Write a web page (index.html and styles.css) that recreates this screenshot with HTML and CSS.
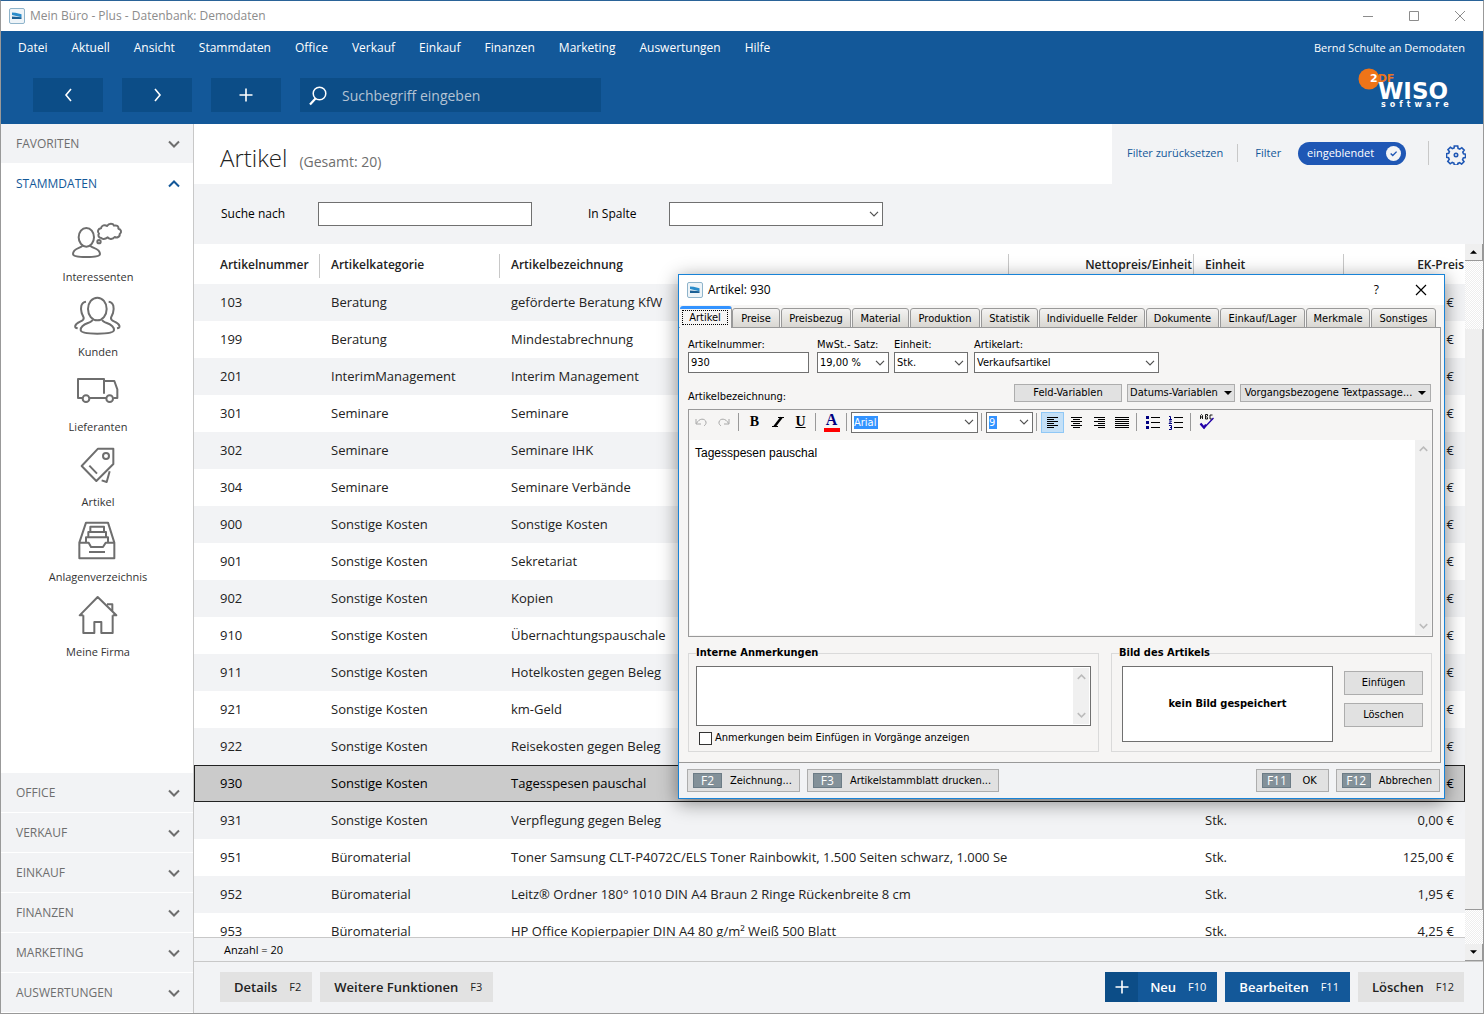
FILE: index.html
```html
<!DOCTYPE html>
<html lang="de">
<head>
<meta charset="utf-8">
<title>Mein Büro - Plus - Datenbank: Demodaten</title>
<link rel="stylesheet" href="styles.css">
</head>
<body>
<svg class="sprite" aria-hidden="true">
  <symbol id="app" viewBox="0 0 16 16"><rect x=".5" y=".5" width="15" height="15" rx="1.5" fill="#eef4f8" stroke="#8fb4cb"/><path d="M3 4.500l3.500.3 6 1.400v3L3 7z" fill="#2a8ccb"/><path d="M3 8.500l9.500.700v1.800H3z" fill="#1b5f94"/></symbol>
  <symbol id="down" viewBox="0 0 12 8"><path d="M1 1.500l5 5 5-5" fill="none" stroke="currentColor" stroke-width="2"/></symbol>
  <symbol id="thin" viewBox="0 0 10 6"><path d="M1 .8l4 4 4-4" fill="none" stroke="#505050" stroke-width="1.200"/></symbol>
  <symbol id="tri" viewBox="0 0 8 4"><path d="M0 0h8L4 4z" fill="currentColor"/></symbol>
  <symbol id="plus" viewBox="0 0 14 14"><path d="M7 .5v13M.5 7h13" stroke="currentColor" stroke-width="1.600"/></symbol>
</svg>

<header class="titlebar">
  <svg class="app-icon"><use href="#app"/></svg>
  <h1>Mein Büro - Plus - Datenbank: Demodaten</h1>
  <div class="window-buttons">
    <button aria-label="Minimieren"><svg viewBox="0 0 12 12"><path d="M1 6.500h10"/></svg></button>
    <button aria-label="Maximieren"><svg viewBox="0 0 12 12"><path d="M1.500 1.500h9v9h-9z"/></svg></button>
    <button aria-label="Schließen"><svg viewBox="0 0 12 12"><path d="M1 1l10 10M11 1L1 11"/></svg></button>
  </div>
</header>

<div class="ribbon">
  <nav class="menu">
    <a href="#">Datei</a><a href="#">Aktuell</a><a href="#">Ansicht</a><a href="#">Stammdaten</a><a href="#">Office</a><a href="#">Verkauf</a><a href="#">Einkauf</a><a href="#">Finanzen</a><a href="#">Marketing</a><a href="#">Auswertungen</a><a href="#">Hilfe</a>
    <span class="user">Bernd Schulte an Demodaten</span>
  </nav>
  <div class="tools">
    <button class="tool" aria-label="Zurück"><svg viewBox="0 0 14 14"><path d="M10 1L5 7l5 6"/></svg></button>
    <button class="tool" aria-label="Vor"><svg viewBox="0 0 14 14"><path d="M5 1l5 6-5 6"/></svg></button>
    <button class="tool" aria-label="Hinzufügen"><svg viewBox="0 0 14 14"><path d="M7 .5v13M.5 7h13"/></svg></button>
    <label class="search">
      <svg viewBox="0 0 18 20"><circle cx="10.500" cy="7.500" r="6.300"/><path d="M6.500 12.500L1 18.500" stroke-width="2.200"/></svg>
      <input type="text" placeholder="Suchbegriff eingeben" aria-label="Suchbegriff eingeben">
    </label>
    <svg class="logo" viewBox="0 0 94 44" role="img" aria-label="ZDF WISO software">
      <circle cx="11" cy="11" r="10.500" fill="#ee7418"/>
      <text class="zdf" x="12" y="14"><tspan fill="#fff">2</tspan><tspan fill="#ee7418">DF</tspan></text>
      <text class="wiso" x="20" y="31">WISO</text>
      <text class="soft" x="23" y="39">software</text>
    </svg>
  </div>
</div>

<div class="body">
  <aside class="sidebar">
    <button class="section">FAVORITEN<svg><use href="#down"/></svg></button>
    <button class="section open">STAMMDATEN<svg><use href="#down"/></svg></button>
    <nav class="shortcuts">
      <a href="#"><svg viewBox="0 0 180 120"><ellipse cx="55" cy="52" rx="23" ry="28"/><path d="M43 76c-1 9-28 7-28 26 0 8 20 9 40 9s41-1 41-9c0-19-28-17-29-26"/><path d="M100 54c-8 0-11-8-7-13-6-6-3-15 6-16 1-9 12-12 18-7 6-9 18-8 21-1 9-3 15 3 13 9 9 2 11 12 4 16 2 9-9 12-15 9-5 7-17 8-21 1-8 6-17 6-19 2z"/><circle cx="93" cy="65" r="5"/></svg>Interessenten</a>
      <a href="#"><svg viewBox="0 0 180 120"><ellipse cx="88" cy="42" rx="28" ry="34"/><path d="M73 74c0 12-35 8-35 31 0 9 25 11 50 11s50-2 50-11c0-23-35-19-35-31"/><path d="M54 20c-16 2-17 20-13 34l6 14c3 13-21 10-25 24-2 5 1 7 7 8M122 20c16 2 17 20 13 34l-6 14c-3 13 21 10 25 24 2 5-1 7-7 8"/></svg>Kunden</a>
      <a href="#"><svg viewBox="0 0 180 120"><path d="M44 84H30V27h78v44M108 33h31l9 25v26h-12M114 84H66"/><circle cx="54" cy="86" r="10"/><circle cx="125" cy="86" r="10"/></svg>Lieferanten</a>
      <a href="#"><svg viewBox="0 0 180 120"><path d="M90 11h46v46l-51 51-44-45zM64 62l23 24M125 79l-9 32-15-5"/><circle cx="114" cy="33" r="9"/></svg>Artikel</a>
      <a href="#"><svg viewBox="0 0 180 120"><path d="M54 8h66l19 60v47H34V68zM34 68h28l7 13h36l8-13h26M54 65V52h66v13M61 51V36h53v15M67 35V20h41v15M63 96h48"/></svg>Anlagenverzeichnis</a>
      <a href="#"><svg viewBox="0 0 180 120"><path d="M46 61H35L89 6l56 55h-11M46 61v53h33V81h21v33h34V61M117 28h16v21"/></svg>Meine Firma</a>
    </nav>
    <div class="sections">
      <button class="section">OFFICE<svg><use href="#down"/></svg></button>
      <button class="section">VERKAUF<svg><use href="#down"/></svg></button>
      <button class="section">EINKAUF<svg><use href="#down"/></svg></button>
      <button class="section">FINANZEN<svg><use href="#down"/></svg></button>
      <button class="section">MARKETING<svg><use href="#down"/></svg></button>
      <button class="section">AUSWERTUNGEN<svg><use href="#down"/></svg></button>
    </div>
  </aside>

  <main class="main">
    <div class="head">
      <div class="heading"><h2>Artikel</h2><span>(Gesamt: 20)</span></div>
      <div class="filters">
        <a class="reset" href="#">Filter zurücksetzen</a>
        <span class="filter-label">Filter</span>
        <button class="pill">eingeblendet<svg viewBox="0 0 16 16"><circle cx="8" cy="8" r="8" fill="#f3f4f6"/><path d="M5 8l2.200 2.200L11.300 6" fill="none" stroke="#1f57b5" stroke-width="1.500"/></svg></button>
        <button class="gear" aria-label="Einstellungen"><svg viewBox="0 0 20 20"><path d="M8.300 1h3.400l.4 2.400 1.700.7 2-1.400 2.400 2.400-1.400 2 .7 1.700 2 .4v3.400l-2.200.4-.7 1.700 1.400 2-2.400 2.400-2-1.400-1.700.7-.2 1.600H8.300l-.4-1.900-1.700-.7-2 1.400-2.400-2.400 1.400-2-.7-1.700-2-.4V8.800l2.200-.4.700-1.700-1.400-2 2.400-2.400 2 1.400 1.700-.7z"/><circle cx="10" cy="10" r="1.700"/></svg></button>
      </div>
    </div>
    <div class="finder">
      <label for="q">Suche nach</label><input id="q" type="text">
      <label for="col">In Spalte</label>
      <span class="combo"><select id="col"><option></option></select><svg><use href="#thin"/></svg></span>
    </div>
    <div class="grid">
      <div class="grid-data">
        <div class="rows">
        <table>
          <colgroup><col class="c1"><col class="c2"><col><col class="c4"><col class="c5"><col class="c6"></colgroup>
          <thead><tr><th><span>Artikelnummer</span></th><th><span>Artikelkategorie</span></th><th><span>Artikelbezeichnung</span></th><th class="num"><span>Nettopreis/Einheit</span></th><th><span>Einheit</span></th><th class="num"><span>EK-Preis</span></th></tr></thead>
          <tbody>
            <tr><td>103</td><td>Beratung</td><td>geförderte Beratung KfW</td><td></td><td></td><td>€</td></tr>
            <tr><td>199</td><td>Beratung</td><td>Mindestabrechnung</td><td></td><td></td><td>€</td></tr>
            <tr><td>201</td><td>InterimManagement</td><td>Interim Management</td><td></td><td></td><td>€</td></tr>
            <tr><td>301</td><td>Seminare</td><td>Seminare</td><td></td><td></td><td>€</td></tr>
            <tr><td>302</td><td>Seminare</td><td>Seminare IHK</td><td></td><td></td><td>€</td></tr>
            <tr><td>304</td><td>Seminare</td><td>Seminare Verbände</td><td></td><td></td><td>€</td></tr>
            <tr><td>900</td><td>Sonstige Kosten</td><td>Sonstige Kosten</td><td></td><td></td><td>€</td></tr>
            <tr><td>901</td><td>Sonstige Kosten</td><td>Sekretariat</td><td></td><td></td><td>€</td></tr>
            <tr><td>902</td><td>Sonstige Kosten</td><td>Kopien</td><td></td><td></td><td>€</td></tr>
            <tr><td>910</td><td>Sonstige Kosten</td><td>Übernachtungspauschale</td><td></td><td></td><td>€</td></tr>
            <tr><td>911</td><td>Sonstige Kosten</td><td>Hotelkosten gegen Beleg</td><td></td><td></td><td>€</td></tr>
            <tr><td>921</td><td>Sonstige Kosten</td><td>km-Geld</td><td></td><td></td><td>€</td></tr>
            <tr><td>922</td><td>Sonstige Kosten</td><td>Reisekosten gegen Beleg</td><td></td><td></td><td>€</td></tr>
            <tr class="selected"><td>930</td><td>Sonstige Kosten</td><td>Tagesspesen pauschal</td><td></td><td></td><td>€</td></tr>
            <tr><td>931</td><td>Sonstige Kosten</td><td>Verpflegung gegen Beleg</td><td></td><td>Stk.</td><td>0,00 €</td></tr>
            <tr><td>951</td><td>Büromaterial</td><td>Toner Samsung CLT-P4072C/ELS Toner Rainbowkit, 1.500 Seiten schwarz, 1.000 Se</td><td></td><td>Stk.</td><td>125,00 €</td></tr>
            <tr><td>952</td><td>Büromaterial</td><td>Leitz® Ordner 180° 1010 DIN A4 Braun 2 Ringe Rückenbreite 8 cm</td><td></td><td>Stk.</td><td>1,95 €</td></tr>
            <tr><td>953</td><td>Büromaterial</td><td>HP Office Kopierpapier DIN A4 80 g/m² Weiß 500 Blatt</td><td></td><td>Stk.</td><td>4,25 €</td></tr>
          </tbody>
        </table>
        </div>
        <div class="count">Anzahl = 20</div>
      </div>
      <div class="scroll">
        <button aria-label="Nach oben"><svg class="up"><use href="#tri"/></svg></button>
        <div class="thumb"></div>
        <button aria-label="Nach unten"><svg><use href="#tri"/></svg></button>
      </div>
    </div>
    <footer class="actions">
      <button>Details<kbd>F2</kbd></button>
      <button>Weitere Funktionen<kbd>F3</kbd></button>
      <button class="primary new"><span class="plus"><svg><use href="#plus"/></svg></span>Neu<kbd>F10</kbd></button>
      <button class="primary">Bearbeiten<kbd>F11</kbd></button>
      <button>Löschen<kbd>F12</kbd></button>
    </footer>
  </main>
</div>

<section class="dialog" role="dialog" aria-labelledby="dlg-title">
  <header class="dlg-title">
    <svg class="app-icon"><use href="#app"/></svg>
    <h2 id="dlg-title">Artikel: 930</h2>
    <button aria-label="Hilfe">?</button>
    <button aria-label="Schließen"><svg viewBox="0 0 12 12"><path d="M1 1l10 10M11 1L1 11"/></svg></button>
  </header>
  <div class="tabs" role="tablist">
    <button role="tab" aria-selected="true"><span>Artikel</span></button><button role="tab">Preise</button><button role="tab">Preisbezug</button><button role="tab">Material</button><button role="tab">Produktion</button><button role="tab">Statistik</button><button role="tab">Individuelle Felder</button><button role="tab">Dokumente</button><button role="tab">Einkauf/Lager</button><button role="tab">Merkmale</button><button role="tab">Sonstiges</button>
  </div>
  <div class="panel">
    <div class="fields">
      <div><label for="nr">Artikelnummer:</label><input id="nr" type="text" value="930"></div>
      <div><label for="mwst">MwSt.- Satz:</label><span class="combo"><select id="mwst"><option>19,00 %</option></select><svg><use href="#thin"/></svg></span></div>
      <div><label for="unit">Einheit:</label><span class="combo"><select id="unit"><option>Stk.</option></select><svg><use href="#thin"/></svg></span></div>
      <div><label for="art">Artikelart:</label><span class="combo"><select id="art"><option>Verkaufsartikel</option></select><svg><use href="#thin"/></svg></span></div>
    </div>
    <div class="variables">
      <label for="text">Artikelbezeichnung:</label>
      <button>Feld-Variablen</button>
      <button>Datums-Variablen<svg><use href="#tri"/></svg></button>
      <button>Vorgangsbezogene Textpassage...<svg><use href="#tri"/></svg></button>
    </div>
    <div class="editor">
      <div class="format">
        <button aria-label="Rückgängig" class="off"><svg viewBox="0 0 16 16"><path d="M3 5v5h5M3.500 9.500C6 4 12 4 13 8c.4 2-1 3-2 4"/></svg></button>
        <button aria-label="Wiederholen" class="off"><svg viewBox="0 0 16 16"><path d="M13 5v5H8M12.500 9.500C10 4 4 4 3 8c-.4 2 1 3 2 4"/></svg></button>
        <i class="sep"></i>
        <button class="letter b">B</button>
        <button class="letter" aria-label="Kursiv"><svg viewBox="0 0 16 16"><path d="M8 3.500h6M2 12.500h6" stroke-width="1"/><path d="M11.500 3.500L4.500 12.500" stroke-width="2.400"/></svg></button>
        <button class="letter u">U</button>
        <i class="sep"></i>
        <button class="letter color">A</button>
        <i class="sep"></i>
        <span class="combo font"><input type="text" value="Arial" aria-label="Schriftart"><svg><use href="#thin"/></svg></span>
        <i class="sep"></i>
        <span class="combo size"><input type="text" value="9" aria-label="Schriftgröße"><svg><use href="#thin"/></svg></span>
        <i class="sep"></i>
        <button class="on" aria-label="Linksbündig"><svg viewBox="0 0 16 16"><path d="M2 3.500h11M2 5.500h7M2 7.500h11M2 9.500h7M2 11.500h11M2 13.500h7"/></svg></button>
        <button aria-label="Zentriert"><svg viewBox="0 0 16 16"><path d="M3 3.500h11M5 5.500h7M3 7.500h11M5 9.500h7M3 11.500h11M5 13.500h7"/></svg></button>
        <button aria-label="Rechtsbündig"><svg viewBox="0 0 16 16"><path d="M3 3.500h11M7 5.500h7M3 7.500h11M7 9.500h7M3 11.500h11M7 13.500h7"/></svg></button>
        <button aria-label="Blocksatz"><svg viewBox="0 0 16 16"><path d="M1 3.500h14M1 5.500h14M1 7.500h14M1 9.500h14M1 11.500h14M1 13.500h14"/></svg></button>
        <i class="sep"></i>
        <button aria-label="Aufzählung"><svg viewBox="0 0 16 16"><path d="M6 3.500h9M6 8.500h9M6 13.500h9"/><path d="M1 3.500h3M1 8.500h3M1 13.500h3" stroke="#000080" stroke-width="3"/></svg></button>
        <button aria-label="Nummerierung"><svg viewBox="0 0 16 16"><path d="M6 3.500h9M6 8.500h9M6 13.500h9"/><path d="M1 2.500h1.500V5M1 5.500h3M1 7h2.500L1 9.500h3M1 11.500h2.500v4H1M2 13.500h2" stroke="#000080"/></svg></button>
        <i class="sep"></i>
        <button aria-label="Rechtschreibung"><svg viewBox="0 0 16 16"><path d="M1.500 5V1.500l1-1 1 1V5M1.500 3h2M6.500 5V.500h2V2l-1 .8 1 .7V5h-2M13.500 1h-2.500v4h2.500" stroke-width=".9"/><path d="M1.500 10l3.500 4L14.500 4" stroke="#2300a8" stroke-width="1.300"/><path d="M1.500 9.500L5 13.500l2-3" stroke="#2300a8" stroke-width="2.200"/></svg></button>
      </div>
      <div class="page">
        <textarea id="text">Tagesspesen pauschal</textarea>
        <div class="mini-scroll"><svg class="up"><use href="#down"/></svg><svg><use href="#down"/></svg></div>
      </div>
    </div>
    <div class="groups">
      <fieldset class="notes">
        <legend>Interne Anmerkungen</legend>
        <div class="note-box"><textarea aria-label="Interne Anmerkungen"></textarea><div class="mini-scroll"><svg class="up"><use href="#down"/></svg><svg><use href="#down"/></svg></div></div>
        <label class="check"><input type="checkbox">Anmerkungen beim Einfügen in Vorgänge anzeigen</label>
      </fieldset>
      <fieldset class="image">
        <legend>Bild des Artikels</legend>
        <div class="image-row">
          <div class="preview">kein Bild gespeichert</div>
          <div class="image-buttons"><button>Einfügen</button><button>Löschen</button></div>
        </div>
      </fieldset>
    </div>
  </div>
  <footer class="dlg-actions">
    <button><kbd>F2</kbd><span>Zeichnung...</span></button>
    <button><kbd>F3</kbd><span>Artikelstammblatt drucken...</span></button>
    <button class="ok"><kbd>F11</kbd><span>OK</span></button>
    <button><kbd>F12</kbd><span>Abbrechen</span></button>
  </footer>
</section>
</body>
</html>
```
FILE: styles.css
```css
:root {
  --blue: #135899;
  --dark: #0c4d87;
  --grey: #f2f3f5;
  --ui: "Open Sans", "Noto Sans", sans-serif;
  --small: "DejaVu Sans Condensed", "DejaVu Sans", sans-serif;
}
* { box-sizing: border-box; }
body {
  margin: 0;
  height: 100vh;
  display: flex;
  flex-direction: column;
  overflow: hidden;
  position: relative;
  font: 12px/18px var(--ui);
  color: #222;
  background: #fff;
  border: 1px solid #999;
  border-top-color: #2a6398;
}
button, input, select, textarea { font: inherit; color: inherit; margin: 0; padding: 0; border: 0; border-radius: 0; background: none; }
h1, h2 { margin: 0; font-weight: 400; }
a { color: inherit; text-decoration: none; }
svg { display: block; flex: none; }
kbd { font: inherit; }
.sprite { position: absolute; width: 0; height: 0; }
.app-icon { width: 16px; height: 16px; }
.up { transform: rotate(180deg); }

.titlebar { display: flex; align-items: center; height: 30px; flex: none; padding: 0 17px 0 8px; gap: 5px; color: #8c8c8c; }
.titlebar h1 { font-size: 12px; }
.window-buttons { margin-left: auto; display: flex; gap: 34px; }
.window-buttons svg { width: 12px; height: 12px; fill: none; stroke: #8c8c8c; }

.ribbon { background: var(--blue); color: #fff; flex: none; height: 93px; }
.menu { display: flex; gap: 24px; padding: 8px 18px 0 17px; height: 47px; }
.user { margin-left: auto; font-size: 11px; }
.tools { display: flex; padding: 0 31px 0 32px; }
.tool { width: 70px; height: 34px; background: var(--dark); margin-right: 19px; display: grid; place-items: center; }
.tool svg { width: 14px; height: 14px; fill: none; stroke: #fff; stroke-width: 1.6; }
.search { display: flex; align-items: center; width: 301px; height: 34px; padding: 1px 9px 0; gap: 15px; background: var(--dark); }
.search svg { width: 18px; height: 20px; fill: none; stroke: #fff; stroke-width: 1.5; }
.search input { flex: 1; min-width: 0; font-size: 14px; outline: 0; }
.search input::placeholder { color: #b4c3d4; opacity: 1; }
.logo { width: 94px; height: 44px; margin: -10px 0 0 auto; font-family: "DejaVu Sans", sans-serif; font-weight: 700; fill: #fff; }
.zdf { font-size: 11px; }
.wiso { font-size: 23px; }
.soft { font-size: 8px; letter-spacing: 4px; }

.body { flex: 1; min-height: 0; display: flex; }
.sidebar { width: 193px; flex: none; display: flex; flex-direction: column; border-right: 1px solid #c8c8c8; }
.section { display: flex; align-items: center; justify-content: space-between; height: 39px; flex: none; padding: 0 13px 0 15px; background: var(--grey); color: #6e6e6e; text-align: left; }
.section svg { width: 12px; height: 8px; }
.section.open { background: #fff; color: var(--blue); height: 41px; }
.section.open svg { transform: rotate(180deg); }
.shortcuts { flex: 1; min-height: 0; padding-top: 16px; overflow: hidden; }
.shortcuts a { display: flex; flex-direction: column; align-items: center; gap: 8px; height: 75px; font-size: 11px; color: #333; padding-left: 2px; }
.shortcuts svg { width: 60px; height: 40px; fill: none; stroke: #6e6e6e; stroke-width: 6; stroke-linejoin: round; }
.sections { display: flex; flex-direction: column; gap: 1px; flex: none; padding-bottom: 1px; }

.main { flex: 1; min-width: 0; display: flex; flex-direction: column; background: var(--grey); }
.head { display: flex; height: 60px; flex: none; }
.heading { flex: 1; display: flex; align-items: baseline; gap: 12px; padding: 16px 0 0 26px; background: #fff; }
.heading h2 { font-size: 24px; line-height: 36px; font-weight: 300; }
.heading span { font-size: 14px; color: #6e6e6e; }
.filters { display: flex; align-items: center; width: 371px; padding: 0 17px 2px 15px; color: var(--blue); font-size: 11px; }
.reset { padding-right: 14px; border-right: 1px solid #c8c8c8; }
.filter-label { padding-left: 17px; }
.pill { display: flex; align-items: center; justify-content: space-between; height: 23px; width: 108px; margin-left: auto; padding: 0 5px 0 9px; border-radius: 12px; background: #1f57b5; color: #fff; }
.pill svg { width: 15px; height: 15px; }
.gear { margin-left: 22px; padding: 4px 0 0 17px; border-left: 1px solid #c8c8c8; }
.gear svg { width: 20px; height: 20px; fill: none; stroke: #1f57b5; stroke-width: 1.6; }
.finder { display: flex; align-items: center; height: 60px; flex: none; padding-left: 27px; color: #000; }
.finder label { width: 97px; }
.finder > input { width: 214px; height: 24px; margin-right: 56px; border: 1px solid #707070; background: #fff; }
.finder label + .combo { width: 214px; height: 24px; margin-left: -16px; }
.combo { display: flex; align-items: center; border: 1px solid #707070; background: #fff; position: relative; }
.combo select, .combo input { appearance: none; flex: 1; min-width: 0; height: 100%; padding: 0 18px 0 2px; outline: 0; }
.combo svg { position: absolute; right: 3px; width: 10px; height: 6px; pointer-events: none; }

.grid { flex: 1; min-height: 0; display: flex; background: #fff; border-bottom: 1px solid #c8c8c8; }
.grid-data { flex: 1; min-width: 0; display: flex; flex-direction: column; }
.rows { flex: 1; min-height: 0; overflow: hidden; }
table { width: 100%; table-layout: fixed; border-collapse: separate; border-spacing: 0; }
.c1 { width: 126px; } .c2 { width: 180px; } .c4 { width: 185px; } .c5 { width: 150px; } .c6 { width: 121px; }
th { height: 40px; padding: 3px 0 0; text-align: left; font-weight: 600; font-size: 12px; }
th span { display: block; height: 24px; line-height: 22px; padding: 0 1px 0 11px; border-right: 1px solid #c8c8c8; white-space: nowrap; }
th:first-child span { padding: 0 0 0 26px; }
th:last-child span { border: 0; }
th.num { text-align: right; }
td { height: 37px; padding: 0 0 2px 11px; font-size: 13px; white-space: nowrap; }
td:first-child { padding-left: 26px; }
td:last-child { padding: 0 11px 2px 0; text-align: right; }
tbody tr:nth-child(odd) { background: var(--grey); }
tbody .selected { background: #cbcbcb; color: #000; }
.selected td { border: solid #222; border-width: 1px 0; }
.selected td:first-child { border-left-width: 1px; padding-left: 25px; }
.selected td:last-child { border-right-width: 1px; padding-right: 10px; }
.count { height: 24px; flex: none; padding-left: 30px; border-top: 1px solid #c8c8c8; background: var(--grey); color: #000; font-size: 11px; line-height: 24px; }
.scroll { width: 18px; flex: none; display: flex; flex-direction: column; background: repeating-conic-gradient(#fff 0 25%, #eee 0 50%) 0 0 / 2px 2px; }
.scroll button { height: 17px; display: grid; place-items: center; background: #efefef; border-right: 1px solid #999; border-bottom: 1px solid #999; }
.scroll svg { width: 7px; height: 4px; color: #000; }
.thumb { flex: 1; margin: 68px 0 34px; background: #efefef; border-right: 1px solid #999; border-bottom: 1px solid #999; }

.actions { display: flex; gap: 8px; height: 51px; flex: none; padding: 10px 19px 0 26px; }
.actions button { display: flex; align-items: center; gap: 12px; height: 30px; padding: 0 11px 0 14px; background: #e2e2e2; font-size: 13px; font-weight: 600; }
.actions button:last-child { padding-right: 10px; }
.actions kbd { font-size: 11px; font-weight: 400; }
.actions .primary { background: var(--blue); color: #fff; }
.actions .new { margin-left: auto; padding-left: 0; }
.plus { width: 33px; height: 30px; background: var(--dark); display: grid; place-items: center; }
.plus svg { width: 14px; height: 14px; }

.dialog { position: absolute; left: 677px; top: 273px; width: 767px; display: flex; flex-direction: column; border: 1px solid #1883d7; background: #f6f5f4; box-shadow: 0 4px 18px rgba(0, 0, 0, .45); color: #000; font: 11px/14px var(--small); }
.dlg-title { display: flex; align-items: center; height: 30px; padding: 0 17px 0 8px; gap: 5px; background: #fff; font: 12px/18px var(--ui); }
.dlg-title h2 { font-size: 12px; margin-right: auto; }
.dlg-title button:last-child { margin-left: 31px; }
.dlg-title button svg { width: 12px; height: 12px; stroke: #000; stroke-width: 1.2; }
.tabs { display: grid; grid-template-columns: 51px 48px 70px 57px 70px 57px 106px 73px 85px 64px 65px; column-gap: 1px; align-items: end; height: 23px; padding-left: 1px; margin-bottom: -1px; position: relative; }
.tabs button { height: 20px; padding-top: 1px; white-space: nowrap; border: 1px solid #999; border-radius: 3px 3px 0 0; background: linear-gradient(#f4f3f2, #d9d7d2); }
.tabs [aria-selected] { height: 22px; border-width: 3px 1px 0 0; border-top-color: #3393ff; background: #f6f5f4; margin-right: -1px; }
.tabs span { display: block; width: 44px; margin: 0 3px 4px; outline: 1px dotted #000; line-height: 13px; }
.panel { margin: 0 3px 0 0; padding: 10px 7px 11px 9px; border: solid #999; border-width: 1px 1px 1px 0; height: 436px; }
.fields { display: flex; }
.fields > div { display: flex; flex-direction: column; }
.fields label { line-height: 14px; white-space: nowrap; }
.fields > div > :last-child { height: 21px; border: 1px solid #707070; background: #fff; }
.fields input { padding: 0 2px; width: 121px; }
.fields > div:nth-child(1) { width: 129px; }
.fields > div:nth-child(2) { width: 72px; margin-right: 5px; }
.fields > div:nth-child(3) { width: 74px; margin-right: 6px; }
.fields > div:nth-child(4) { width: 185px; }
.variables { display: flex; gap: 5px; margin: 11px 2px 0 0; height: 25px; }
.variables label { margin: 6px auto 0 0; }
.variables button, .image-buttons button, .dlg-actions button { background: #e1e1e1; border: 1px solid #adadad; }
.variables button { height: 18px; width: 108px; display: flex; align-items: center; justify-content: center; gap: 6px; white-space: nowrap; }
.variables button:last-child { width: 191px; }
.variables button svg { width: 8px; height: 4px; }
.editor { border: 1px solid #999; height: 228px; display: flex; flex-direction: column; }
.format { display: flex; align-items: center; height: 30px; flex: none; padding: 0 0 6px; }
.format button { width: 23px; height: 21px; display: grid; place-items: center; }
.format svg { width: 16px; height: 16px; fill: none; stroke: #000; }
.format .off svg { stroke: #a8a8a8; }
.format .on { background: #c4e0f7; border: 1px solid #90c8f6; }
.sep { width: 1px; height: 18px; margin: 0 4px 0 3px; background: #999; }
.letter { font: 700 14px/16px "Liberation Serif", serif; }
.letter.u { text-decoration: underline; }
.letter.color { color: #000080; font-size: 16px; line-height: 13px; }
.letter.color::after { content: ""; width: 16px; height: 4px; background: #f00; }
.format .combo { height: 21px; }
.format .combo svg { width: 10px; height: 6px; }
.format .combo input { color: #fff; background: linear-gradient(#3393ff, #3393ff) 2px 3px / 24px 13px no-repeat; }
.font { width: 127px; }
.size { width: 47px; }
.format .size input { background-size: 8px 13px; }
.page { flex: 1; display: flex; background: #fff; margin: 0 1px 1px; }
textarea { flex: 1; resize: none; outline: 0; }
.page textarea { padding: 6px 5px; font: 12px/14px "Liberation Sans", Arial, sans-serif; }
.mini-scroll { width: 16px; display: flex; flex-direction: column; justify-content: space-between; align-items: center; padding: 6px 0; background: #f0f0f0; color: #bbb; }
.mini-scroll svg { width: 9px; height: 6px; }
.groups { display: flex; gap: 12px; margin: 9px 1px 0 0; }
fieldset { min-width: 0; margin: 0; padding: 0 7px; border: 1px solid #dadada; height: 106px; }
legend { padding: 0; font-weight: 700; line-height: 14px; }
.notes { flex: 1; }
.note-box { display: flex; height: 60px; border: 1px solid #707070; background: #fff; margin-top: 6px; padding: 1px; }
.check { display: flex; align-items: center; gap: 3px; margin: 5px 0 0 3px; }
.check input { appearance: none; width: 13px; height: 13px; border: 1px solid #333; background: #fff; }
.image { width: 321px; }
.image-row { display: flex; justify-content: space-between; padding: 6px 1px 0 3px; }
.preview { width: 211px; height: 76px; border: 1px solid #707070; background: #fff; display: grid; place-items: center; font-weight: 700; }
.image-buttons { display: flex; flex-direction: column; gap: 8px; padding-top: 5px; }
.image-buttons button { width: 79px; height: 24px; }
.dlg-actions { display: flex; gap: 7px; height: 35px; padding: 6px 4px 5px 8px; background: var(--grey); }
.dlg-actions button { display: flex; align-items: center; height: 23px; padding: 0 7px 0 5px; white-space: nowrap; }
.dlg-actions kbd { width: 29px; height: 15px; margin-right: 8px; border: 1px solid #6c7c86; background: #839199; color: #fff; font: 12px/13px var(--ui); }
.dlg-actions .ok { margin-left: auto; padding-right: 11px; }
.dlg-actions .ok span { padding-left: 3px; }
```
